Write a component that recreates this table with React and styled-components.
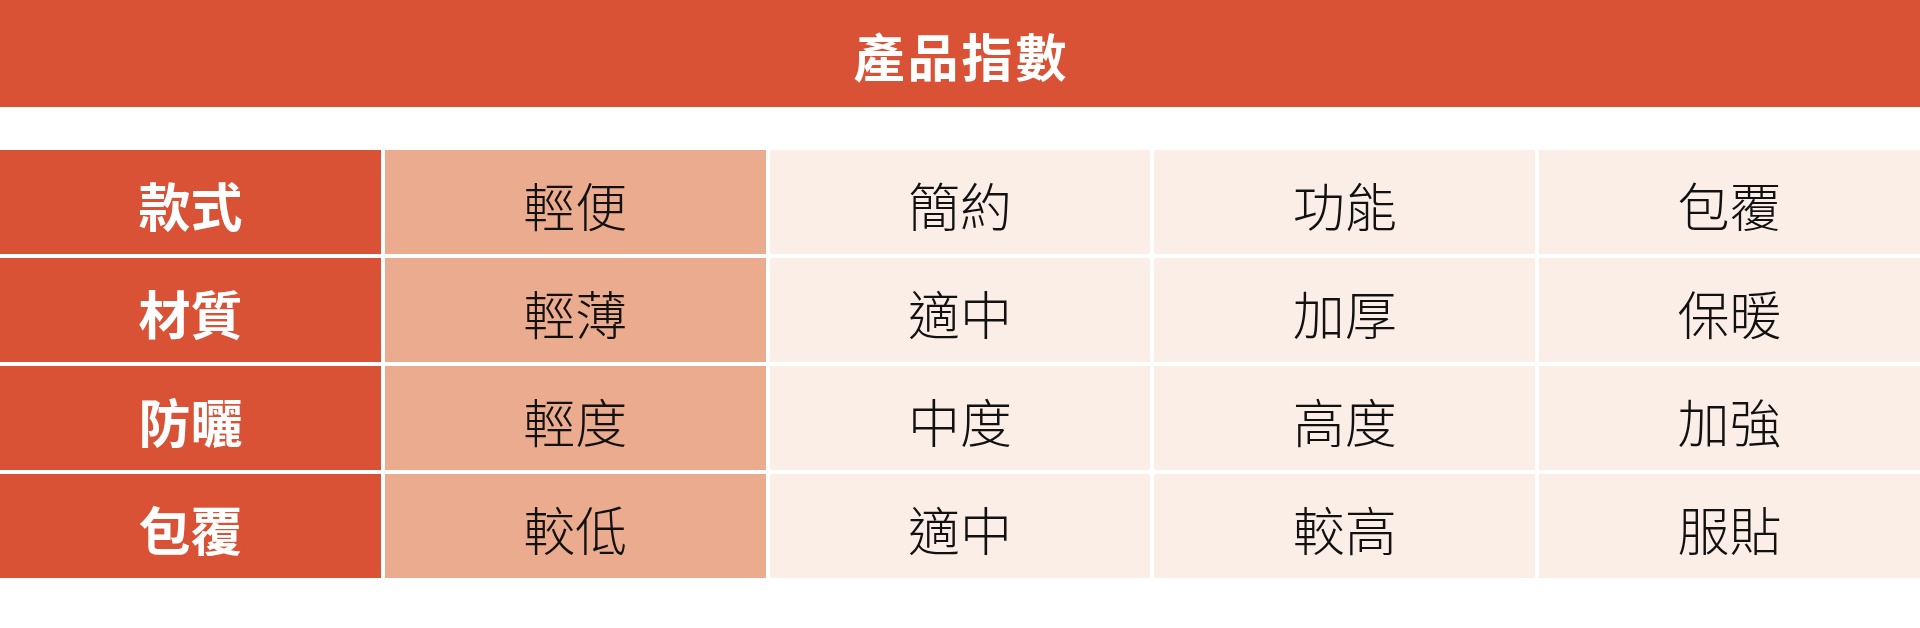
import React from 'react';
import styled, { createGlobalStyle } from 'styled-components';

const GlobalStyle = createGlobalStyle`
  html, body {
    margin: 0;
    padding: 0;
    background: #ffffff;
  }
  body {
    font-family: "Noto Sans CJK TC", "Noto Sans CJK SC", "Noto Sans", sans-serif;
  }
`

const rows = [
  { label: '款式', values: ['輕便', '簡約', '功能', '包覆'] },
  { label: '材質', values: ['輕薄', '適中', '加厚', '保暖'] },
  { label: '防曬', values: ['輕度', '中度', '高度', '加強'] },
  { label: '包覆', values: ['較低', '適中', '較高', '服貼'] },
]

export default function App() {
  return (
    <>
      <GlobalStyle />
      <Page>
        <Banner>
          <Title>產品指數</Title>
        </Banner>
        <Table>
          {rows.map(row => (
            <React.Fragment key={row.label}>
              <LabelCell>{row.label}</LabelCell>
              {row.values.map((v, i) => (
                <Cell key={i} highlight={i === 0}>{v}</Cell>
              ))}
            </React.Fragment>
          ))}
        </Table>
      </Page>
    </>
  )
}

const Page = styled.div`
  width: 1920px;
  height: 628px;
  background: #ffffff;
  display: flex;
  flex-direction: column;
`

const Banner = styled.header`
  height: 107px;
  background: #da5236;
  display: flex;
  align-items: center;
  justify-content: center;
`

const Title = styled.h1`
  margin: 0;
  color: #ffffff;
  font-size: 51px;
  font-weight: 700;
  letter-spacing: 3px;
  padding-left: 3px;
  padding-top: 4px;
  line-height: 1;
`

const Table = styled.div`
  margin-top: 43px;
  display: grid;
  grid-template-columns: repeat(5, 1fr);
  grid-auto-rows: 104px;
  gap: 4px;
`

const BaseCell = styled.div`
  display: flex;
  align-items: center;
  justify-content: center;
  font-size: 52px;
  line-height: 1;
  padding-top: 6px;
  box-sizing: border-box;
`

const LabelCell = styled(BaseCell)`
  background: #da5236;
  color: #ffffff;
  font-weight: 700;
`

const Cell = styled(BaseCell).withConfig({
  shouldForwardProp: prop => prop !== 'highlight',
})`
  background: ${p => (p.highlight ? '#ebab8f' : '#faeee6')};
  color: #111111;
  font-weight: 300;
`
